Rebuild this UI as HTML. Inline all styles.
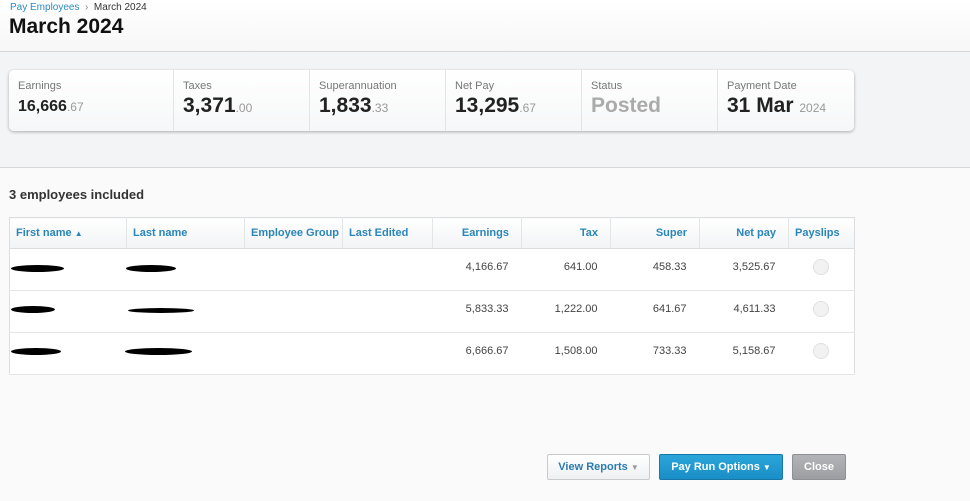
<!DOCTYPE html>
<html><head><style>
*{box-sizing:border-box;margin:0;padding:0}
body{width:970px;height:501px;overflow:hidden;font-family:"Liberation Sans",Arial,sans-serif;background:#fafafa;position:relative}
.hdr{position:absolute;left:0;top:0;width:970px;height:52px;background:linear-gradient(#fff,#f7f7f8);border-bottom:1px solid #d5d7da}
.bc{position:absolute;left:10px;top:2px;font-size:10px;color:#333}
.bc a{color:#2a8cbf}
.h1{position:absolute;left:9px;top:15px;font-size:21px;font-weight:bold;color:#111}
.gray{position:absolute;left:0;top:52px;width:970px;height:116px;background:#f3f4f6;border-bottom:1px solid #d5d7da}
.card{position:absolute;left:9px;top:70px;width:845px;height:61px;background:linear-gradient(#fff,#f6f7f8);border-radius:5px;box-shadow:0 1px 3px rgba(0,0,0,.3)}
.c{position:absolute;top:0;height:61px;border-right:1px solid #e3e4e6;padding:10px 0 0 9px}
.c .l{font-size:11px;color:#777}
.c .v{font-size:21px;font-weight:bold;color:#222;margin-top:2px;white-space:nowrap}
.c .v small{font-size:12px;font-weight:normal;color:#999}
.cnt{position:absolute;left:9px;top:187px;font-size:13px;font-weight:bold;color:#333}
table{position:absolute;left:9px;top:217px;width:846px;border-collapse:collapse;background:#fff;border:1px solid #dcdddf;font-size:11px;table-layout:fixed}
th{height:31px;background:linear-gradient(#fff,#f2f3f5);color:#2a86b8;font-weight:bold;border-right:1px solid #e4e5e7;border-bottom:1px solid #dcdddf;padding:0 6px;text-align:left;white-space:nowrap;overflow:hidden}
td{height:42px;border-bottom:1px solid #e4e5e7;color:#444;padding:0 13px 6px 0;text-align:right}
th.r{text-align:right;padding-right:12px}
.rad{display:inline-block;width:16px;height:16px;border-radius:50%;background:#f2f2f2;border:1px solid #e0e0e0;vertical-align:middle}
.blob{position:absolute;height:7px;background:#000;border-radius:50%}
.btn{position:absolute;top:454px;height:26px;border-radius:2px;font-size:11px;font-weight:bold;line-height:24px;text-align:center}
</style></head><body>
<div class="hdr"><div class="bc"><a>Pay Employees</a> <span style="color:#888">&nbsp;›&nbsp;</span> March 2024</div><div class="h1">March 2024</div></div>
<div class="gray"></div>
<div class="card">
<div class="c" style="left:0;width:165px"><div class="l">Earnings</div><div class="v" style="font-size:16px;margin-top:6px">16,666<small>.67</small></div></div>
<div class="c" style="left:165px;width:136px"><div class="l">Taxes</div><div class="v">3,371<small>.00</small></div></div>
<div class="c" style="left:301px;width:136px"><div class="l">Superannuation</div><div class="v">1,833<small>.33</small></div></div>
<div class="c" style="left:437px;width:136px"><div class="l">Net Pay</div><div class="v">13,295<small>.67</small></div></div>
<div class="c" style="left:573px;width:136px"><div class="l">Status</div><div class="v" style="color:#aaa">Posted</div></div>
<div class="c" style="left:709px;width:136px;border:none"><div class="l">Payment Date</div><div class="v">31 Mar <small>2024</small></div></div>
</div>
<div class="cnt">3 employees included</div>
<table>
<colgroup><col style="width:117px"><col style="width:118px"><col style="width:98px"><col style="width:90px"><col style="width:89px"><col style="width:89px"><col style="width:89px"><col style="width:89px"><col style="width:66px"></colgroup>
<tr><th>First name <span style="font-size:8px">▲</span></th><th>Last name</th><th>Employee Group</th><th>Last Edited</th><th class="r">Earnings</th><th class="r">Tax</th><th class="r">Super</th><th class="r">Net pay</th><th style="border-right:none">Payslips</th></tr>
<tr><td></td><td></td><td></td><td></td><td>4,166.67</td><td>641.00</td><td>458.33</td><td>3,525.67</td><td style="text-align:center;padding:0 0 6px"><span class="rad"></span></td></tr>
<tr><td></td><td></td><td></td><td></td><td>5,833.33</td><td>1,222.00</td><td>641.67</td><td>4,611.33</td><td style="text-align:center;padding:0 0 6px"><span class="rad"></span></td></tr>
<tr><td></td><td></td><td></td><td></td><td>6,666.67</td><td>1,508.00</td><td>733.33</td><td>5,158.67</td><td style="text-align:center;padding:0 0 6px"><span class="rad"></span></td></tr>
</table>
<div class="blob" style="left:11px;top:265px;width:53px"></div>
<div class="blob" style="left:126px;top:265px;width:50px"></div>
<div class="blob" style="left:11px;top:306px;width:44px"></div>
<div class="blob" style="left:128px;top:308px;width:66px;height:5px"></div>
<div class="blob" style="left:11px;top:348px;width:50px"></div>
<div class="blob" style="left:125px;top:348px;width:67px"></div>
<div class="btn" style="left:547px;width:103px;background:linear-gradient(#fff,#eef0f2);border:1px solid #c8cacc;color:#2a7bb0">View Reports <span style="color:#999;font-size:8px">▼</span></div>
<div class="btn" style="left:659px;width:124px;background:linear-gradient(#2aa6da,#1a8ec6);border:1px solid #1677a8;color:#fff">Pay Run Options <span style="font-size:8px">▼</span></div>
<div class="btn" style="left:792px;width:54px;background:linear-gradient(#b2b4b7,#9c9ea1);border:1px solid #8e9093;color:#fff">Close</div>
</body></html>
